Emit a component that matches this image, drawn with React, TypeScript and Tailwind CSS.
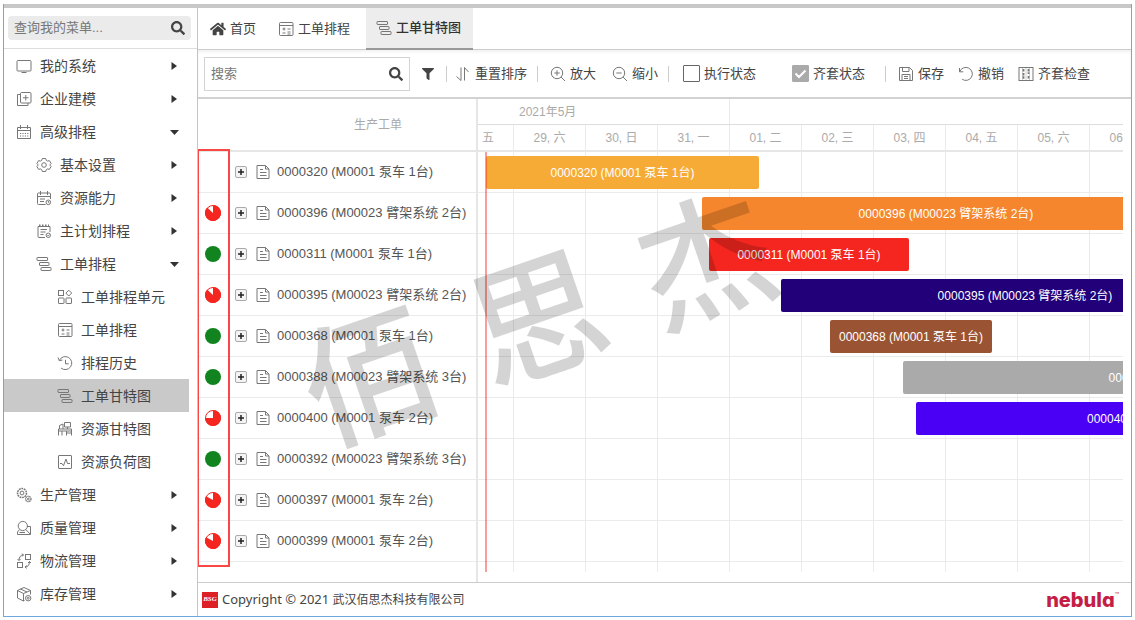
import React from "react";
import { FaHome, FaSearch, FaFilter } from "react-icons/fa";

type IconName =
  | "monitor" | "model" | "calendar" | "gear" | "resource" | "plan" | "gantt" | "units"
  | "sheet" | "history" | "desk" | "load" | "gears" | "quality" | "logistics" | "stock"
  | "sort" | "zoomIn" | "zoomOut" | "save" | "undo" | "check" | "doc";

const shapes: Record<IconName, React.ReactNode> = {
  monitor: <><rect x="1" y="2.5" width="14" height="10.5" rx="1" /><path d="M5.5 14.5h5" /></>,
  model: <><rect x="4.5" y="1.5" width="10.5" height="10.5" rx="1" /><path d="M4.5 3.5h-3v11h10.5v-2.5M9.75 4v5.5M7 6.75h5.5" /></>,
  calendar: <><path d="M1.5 3.5h13v11h-13zM1.5 6.5h13M4.5 1v4M11.5 1v4" /><path d="M4 9.5h8.5M4 12h8.5" strokeDasharray="1.2 1.2" /></>,
  gear: <><path d="M6.300 1.500h3.400l.6 1.900 1.200.7 1.900-.5 1.700 2.900-1.400 1.500 1.400 1.500-1.700 2.900-1.900-.5-1.200.7-.6 1.900H6.300l-.6-1.900-1.200-.7-1.900.5L.9 9.500 2.300 8 .9 6.500l1.700-2.900 1.900.5 1.200-.7z" strokeLinejoin="round" /><circle cx="8" cy="8" r="2.300" /></>,
  resource: <><path d="M9.5 14.5h-7a1 1 0 0 1-1-1v-9.500a1 1 0 0 1 1-1h11a1 1 0 0 1 1 1V9M1.500 6.500h13M4.500 1v4M11.500 1v4M4 9h5M4 11.500h4" /><circle cx="12.3" cy="12.3" r="2.3" /><path d="M12.300 11v1.400h1" /></>,
  plan: <><path d="M9 14.5H3a1 1 0 0 1-1-1v-10h12V9" /><path d="M3 2.200h10" strokeDasharray="1.500 1.500" strokeWidth="1.600" /><path d="M4.500 6.500h6.500M4.500 9h5M4.500 11.500h3" /><circle cx="12.300" cy="12.300" r="2.200" /><path d="M11.400 12.300l.8.8 1.300-1.400" /></>,
  gantt: <><rect x="1" y="1.500" width="10.500" height="3" rx=".5" /><rect x="3.500" y="6.500" width="9.500" height="3" rx=".5" /><rect x="5" y="11.500" width="10" height="3" rx=".5" /></>,
  units: <><rect x="1.500" y="1.500" width="5" height="5" /><rect x="1.500" y="9" width="5.500" height="5.500" rx=".5" /><rect x="9" y="9" width="5.500" height="5.500" rx=".5" /><path d="M11.800 1.200l2.900 2.900-2.900 2.900-2.900-2.900z" /></>,
  sheet: <><rect x="1.500" y="1.500" width="13.500" height="13" rx="1" /><path d="M1.500 4.500h13.500M6 6.500v3M4.500 8h3M9.500 8h3M4.500 12h3M9.500 11h3M9.500 13h3" /></>,
  history: <><path d="M2.300 5.500A6.500 6.500 0 1 1 4 13M1 2.500l1.300 3.200 3.200-.7M8.500 4.800v4h3.200" /></>,
  desk: <><path d="M1.500 14.500V8h13v6.500M1.500 10h13M9.500 10v4.500M9.500 12h5M5 14.500V10M2.500 8V4.500L6 3v5M7.500 1.500h6v4.500h-6zM10.500 6v2" /></>,
  load: <><rect x="1.500" y="1.500" width="13" height="13" rx=".5" /><path d="M3 9.500h2l1.500 2.200L9 5l1.500 4.500H13" /></>,
  gears: <><circle cx="6" cy="6" r="4.500" strokeDasharray="1.800 .7" strokeWidth="1.500" /><circle cx="6" cy="6" r="1.900" /><circle cx="12.300" cy="12" r="2.700" strokeDasharray="1.400 .5" strokeWidth="1.300" /><circle cx="12.300" cy="12" r=".9" /></>,
  quality: <><path d="M3.500 9.500L1.500 12v2.500h13V6.500H11" /><circle cx="6.800" cy="6" r="4.600" /><path d="M9.800 9.500l4.500 4.800M3.500 12.500h5.500" /></>,
  logistics: <><rect x="9.500" y="1.500" width="5" height="5" /><rect x="1.500" y="9.500" width="5" height="5" /><path d="M7.500 2C4.500 2 3 4 3 7.500M1.500 6L3 7.500 4.500 6M5.800 .700L7.500 2 5.800 3.300M9 14c3 0 4.500-2 4.500-5.500M12 10l1.500-1.500L15 10M10.700 12.600L9 14l1.700 1.300" /></>,
  stock: <><path d="M8.500 14.500L7.500 15l-6-3V4.500L8 1.500l6.500 3V8.500M1.500 4.500l6 3 7-3M7.500 7.500V15M4.500 3l6.500 3" /><circle cx="12.200" cy="12.200" r="2.700" /><circle cx="12.200" cy="12.200" r="1" /></>,
  sort: <><path d="M1.500 10.500L6 14.500V1.500" /><path d="M9.500 14.500V1.500l4 4.500" /></>,
  zoomIn: <><circle cx="7" cy="7" r="5.700" /><path d="M11 11l4 4M7 4.300v5.400M4.300 7h5.400" /></>,
  zoomOut: <><circle cx="7" cy="7" r="5.700" /><path d="M11 11l4 4M4.300 7h5.400" /></>,
  save: <><path d="M1.500 1.500h10l3 3v10h-13zM4.500 1.500v4h6.500v-4M4 14.500v-6h8v6M6 10.500h4M6 12.500h4" /></>,
  undo: <path d="M1.500 2v3.800h3.800M1.800 5.500A6.500 6.500 0 1 1 4.200 13.300" />,
  check: <><rect x="1" y="1.500" width="14" height="13" /><path d="M4.500 1.500v13M8 1.500v13M11.500 1.500v13" opacity=".35" /><path d="M5.500 3v2.500M5.500 7v6M10.500 3v5M10.500 10v3" strokeWidth="1.800" strokeDasharray="2.500 .7" /></>,
  doc: <><path d="M2 1.500h8.500l3.500 3.500v9.500H2zM10.500 1.500V5H14M5 5.500h3M5 8.500h6.500M5 11.500h6.500" /></>,
};

function Icon({ name, className = "" }: { name: IconName; className?: string }) {
  return (
    <svg aria-hidden="true" viewBox="0 0 16 16" className={`size-4 shrink-0 fill-none stroke-[#777] stroke-1 ${className}`}>
      {shapes[name]}
    </svg>
  );
}

type MenuItem = { label: string; icon: IconName; level: 0 | 1 | 2; arrow?: "right" | "down"; active?: boolean };

const menu: MenuItem[] = [
  { label: "我的系统", icon: "monitor", level: 0, arrow: "right" },
  { label: "企业建模", icon: "model", level: 0, arrow: "right" },
  { label: "高级排程", icon: "calendar", level: 0, arrow: "down" },
  { label: "基本设置", icon: "gear", level: 1, arrow: "right" },
  { label: "资源能力", icon: "resource", level: 1, arrow: "right" },
  { label: "主计划排程", icon: "plan", level: 1, arrow: "right" },
  { label: "工单排程", icon: "gantt", level: 1, arrow: "down" },
  { label: "工单排程单元", icon: "units", level: 2 },
  { label: "工单排程", icon: "sheet", level: 2 },
  { label: "排程历史", icon: "history", level: 2 },
  { label: "工单甘特图", icon: "gantt", level: 2, active: true },
  { label: "资源甘特图", icon: "desk", level: 2 },
  { label: "资源负荷图", icon: "load", level: 2 },
  { label: "生产管理", icon: "gears", level: 0, arrow: "right" },
  { label: "质量管理", icon: "quality", level: 0, arrow: "right" },
  { label: "物流管理", icon: "logistics", level: 0, arrow: "right" },
  { label: "库存管理", icon: "stock", level: 0, arrow: "right" },
];

const indent = ["pl-3", "pl-8", "pl-[53px]"];

function Sidebar() {
  return (
    <aside className="flex w-[193px] shrink-0 flex-col">
      <div className="flex h-[41px] items-center border-b border-[#ddd] pl-1 pr-1.5">
        <div className="flex h-6 w-full items-center rounded-sm bg-[#ebebeb] pl-1.5 pr-1.5">
          <input aria-label="查询我的菜单" placeholder="查询我的菜单..." className="w-full min-w-0 bg-transparent text-[13px] outline-none placeholder:text-[#777]" />
          <button aria-label="查询" className="shrink-0"><FaSearch className="size-3.5 text-[#444]" /></button>
        </div>
      </div>
      <nav className="pr-2">
        {menu.map((m, i) => (
          <a key={i} href="#" className={`flex h-[33px] items-center gap-2 pr-2.5 text-sm text-[#444] ${indent[m.level]} ${m.active ? "bg-[#c9c9c9]" : ""}`}>
            <Icon name={m.icon} />
            <span className="grow whitespace-nowrap">{m.label}</span>
            {m.arrow && (
              <svg aria-hidden="true" viewBox="0 0 10 10" className="size-2.5 fill-[#333]">
                <path d={m.arrow === "right" ? "M2.500 1v8L8 5z" : "M1 3h9L5.500 8z"} />
              </svg>
            )}
          </a>
        ))}
      </nav>
    </aside>
  );
}

function Tabs() {
  return (
    <nav className="flex h-[42px] items-stretch border-b border-[#ccc] pl-1 text-[13px] text-[#444]">
      <a href="#" className="flex items-center gap-1 pl-2 pr-3"><FaHome className="size-4" />首页</a>
      <a href="#" className="flex items-center gap-1 pl-2.5 pr-3"><Icon name="sheet" />工单排程</a>
      <a href="#" aria-current="page" className="-mb-px ml-1 flex items-center gap-1 border-b-2 border-[#999] bg-[#ededed] pl-2.5 pr-3 font-medium text-[#333]"><Icon name="gantt" />工单甘特图</a>
    </nav>
  );
}

function Divider() {
  return <span className="h-4 w-px shrink-0 bg-[#ccc]" />;
}

function Tool({ icon, label }: { icon: IconName; label: string }) {
  return (
    <button className="flex items-center gap-1 whitespace-nowrap">
      <Icon name={icon} />
      {label}
    </button>
  );
}

function Check({ label, checked = false }: { label: string; checked?: boolean }) {
  return (
    <label className="flex items-center gap-1 whitespace-nowrap">
      <span className="relative flex">
        <input type="checkbox" defaultChecked={checked} className="peer size-[17px] appearance-none rounded-[1px] border border-[#666] checked:border-[#aaa] checked:bg-[#aaa]" />
        <svg aria-hidden="true" viewBox="0 0 17 17" className="pointer-events-none absolute inset-0 hidden fill-none stroke-white stroke-2 peer-checked:block">
          <path d="M3.500 8.500l3.500 3.500 6.500-6.500" />
        </svg>
      </span>
      {label}
    </label>
  );
}

function Toolbar() {
  return (
    <div className="flex h-[49px] items-center border-b-2 border-[#d2d2d2] pl-1.5 text-[13px] text-[#444] shadow-[inset_0_2px_3px_rgba(0,0,0,0.06)]">
      <div className="flex h-[34px] w-[206px] shrink-0 items-center border border-[#d4d4d4] pl-1.5 pr-1.5">
        <input aria-label="搜索" placeholder="搜索" className="w-full min-w-0 bg-transparent outline-none placeholder:text-[#777]" />
        <button aria-label="执行搜索" className="shrink-0"><FaSearch className="size-3.5" /></button>
      </div>
      <button aria-label="筛选" className="mx-3"><FaFilter className="size-3" /></button>
      <Divider />
      <div className="ml-2 mr-2.5"><Tool icon="sort" label="重置排序" /></div>
      <Divider />
      <div className="ml-3 mr-2.5 flex gap-4">
        <Tool icon="zoomIn" label="放大" />
        <Tool icon="zoomOut" label="缩小" />
      </div>
      <Divider />
      <div className="ml-3.5 mr-5 flex gap-9">
        <Check label="执行状态" />
        <Check label="齐套状态" checked />
      </div>
      <Divider />
      <div className="ml-3 flex gap-3.5">
        <Tool icon="save" label="保存" />
        <Tool icon="undo" label="撤销" />
        <Tool icon="check" label="齐套检查" />
      </div>
    </div>
  );
}

type Order = { label: string; done?: number; bar?: { start: number; end: number; color: string } };

/* done: share of the kit that is ready; bar: offsets on the time axis, 72 per day */
const orders: Order[] = [
  { label: "0000320 (M0001 泵车 1台)", bar: { start: 8, end: 281, color: "#f7ab37" } },
  { label: "0000396 (M00023 臂架系统 2台)", done: 0.87, bar: { start: 224, end: 712, color: "#f5862d" } },
  { label: "0000311 (M0001 泵车 1台)", done: 1, bar: { start: 231, end: 431, color: "#f5261f" } },
  { label: "0000395 (M00023 臂架系统 2台)", done: 0.87, bar: { start: 303, end: 791, color: "#22007a" } },
  { label: "0000368 (M0001 泵车 1台)", done: 1, bar: { start: 352, end: 514, color: "#9a5434" } },
  { label: "0000388 (M00023 臂架系统 3台)", done: 1, bar: { start: 425, end: 1011, color: "#aaaaaa" } },
  { label: "0000400 (M0001 泵车 2台)", done: 0.75, bar: { start: 438, end: 924, color: "#4a00f5" } },
  { label: "0000392 (M00023 臂架系统 3台)", done: 1 },
  { label: "0000397 (M0001 泵车 2台)", done: 0.83 },
  { label: "0000399 (M0001 泵车 2台)", done: 0.83 },
];

const days = ["29, 六", "30, 日", "31, 一", "01, 二", "02, 三", "03, 四", "04, 五", "05, 六", "06, 日"];

function Status({ done }: { done?: number }) {
  if (done === undefined) return <span className="size-4 shrink-0" />;
  if (done === 1) return <span className="size-4 shrink-0 rounded-full bg-[#11831f]" />;
  const a = done * 2 * Math.PI;
  return (
    <svg aria-hidden="true" viewBox="0 0 16 16" className="size-4 shrink-0">
      <circle cx="8" cy="8" r="7.500" className="fill-white stroke-[#f5261f] stroke-1" />
      <path className="fill-[#f5261f]" d={`M8 8V0A8 8 0 1 1 ${8 + 8 * Math.sin(a)} ${8 - 8 * Math.cos(a)}Z`} />
    </svg>
  );
}

function OrderTable() {
  return (
    <div className="relative w-[280px] shrink-0 border-r-2 border-[#e6e6e6]">
      <table className="w-full border-separate border-spacing-0">
        <thead>
          <tr>
            <th className="h-[53px] border-b-2 border-[#e6e6e6] pl-[82px] text-center text-xs font-normal text-[#aaa]">生产工单</th>
          </tr>
        </thead>
        <tbody>
          {orders.map((o) => (
            <tr key={o.label}>
              <td className="h-[41px] border-b border-[#ebebeb] p-0">
                <div className="flex items-center pl-[7px] text-[13px] text-[#555]">
                  <Status done={o.done} />
                  <button aria-label="展开" className="ml-3.5 flex size-3 shrink-0 items-center justify-center rounded-[2px] border border-[#aaa] bg-[#f4f4f4]">
                    <svg aria-hidden="true" viewBox="0 0 6 6" className="size-1.5 stroke-[#222] stroke-[1.5]"><path d="M0 3h6M3 0v6" /></svg>
                  </button>
                  <Icon name="doc" className="ml-2" />
                  <span className="ml-1.5 whitespace-nowrap">{o.label}</span>
                </div>
              </td>
            </tr>
          ))}
        </tbody>
      </table>
      <div className="pointer-events-none absolute -left-px top-[50px] h-[418px] w-[33px] border-2 border-[#f94844]" />
    </div>
  );
}

function Timeline() {
  return (
    <div className="mr-2 flex min-w-0 grow flex-col overflow-hidden text-xs">
      <div className="flex h-[26px] shrink-0 border-b border-[#ddd] text-[#aaa]">
        <div className="flex w-[252px] shrink-0 items-center border-r border-[#ebebeb] pl-[41px]">2021年5月</div>
      </div>
      <div className="flex h-[27px] shrink-0 border-b-2 border-[#e6e6e6] text-[#aaa]">
        <div className="flex w-9 shrink-0 items-center border-r border-[#ebebeb] pl-1">五</div>
        {days.map((d) => (
          <div key={d} className="flex w-[72px] shrink-0 items-center justify-center border-r border-[#ebebeb]">{d}</div>
        ))}
      </div>
      <div className="relative pb-2.5">
        <div className="absolute inset-0 flex">
          <div className="w-9 shrink-0 border-r border-[#ebebeb]" />
          {days.map((d) => (
            <div key={d} className="w-[72px] shrink-0 border-r border-[#ebebeb]" />
          ))}
        </div>
        {orders.map((o) => (
          <div key={o.label} className="relative h-[41px] border-b border-[#ebebeb]">
            {o.bar && (
              <div
                className="absolute top-1 flex h-[33px] items-center justify-center whitespace-nowrap rounded-[2px] text-white"
                style={{ left: o.bar.start, width: o.bar.end - o.bar.start, backgroundColor: o.bar.color }}
              >
                {o.label}
              </div>
            )}
          </div>
        ))}
        <div className="absolute inset-y-0 left-[7px] w-0.5 bg-[#f5261f]/45" />
      </div>
    </div>
  );
}

function Watermark() {
  return (
    <div aria-hidden="true" className="pointer-events-none absolute left-[96px] top-[143px] flex -rotate-[19deg] gap-11 text-[134px] leading-[1.2] font-medium text-black/[0.17]">
      <span>佰</span>
      <span>思</span>
      <span>杰</span>
    </div>
  );
}

export default function App() {
  return (
    <div className="flex min-h-screen flex-col bg-white px-[3px] pb-[3px] pt-1 font-['Liberation_Sans','Noto_Sans_CJK_SC',sans-serif]">
      <div className="flex grow flex-col border-x border-b border-[#6fa8dc]">
        <div className="h-1 bg-[#c8c8c8]" />
        <div className="flex grow">
          <Sidebar />
          <main className="flex min-w-0 grow flex-col border-l border-[#c4c4c4]">
            <Tabs />
            <Toolbar />
            <section className="relative flex grow overflow-hidden border-b border-[#ccc]">
              <OrderTable />
              <Timeline />
              <Watermark />
            </section>
            <footer className="flex h-[33px] items-center pl-1 pr-3 text-[#444]">
              <span className="flex size-4 items-center justify-center bg-[#dd1f26] font-['Liberation_Serif',serif] text-[7px] font-bold italic text-white">BSG</span>
              <span className="ml-1 grow font-['Noto_Sans','Noto_Sans_CJK_SC',sans-serif] text-[13px]">
                Copyright © 2021 <span className="text-xs">武汉佰思杰科技有限公司</span>
              </span>
              <span className="flex items-start font-['Inter',sans-serif] text-[#c41e46]">
                <span className="text-xl leading-5 font-extrabold [font-feature-settings:'cv11']">nebula</span>
                <span className="text-[7px] leading-3">™</span>
              </span>
            </footer>
          </main>
        </div>
      </div>
    </div>
  );
}
